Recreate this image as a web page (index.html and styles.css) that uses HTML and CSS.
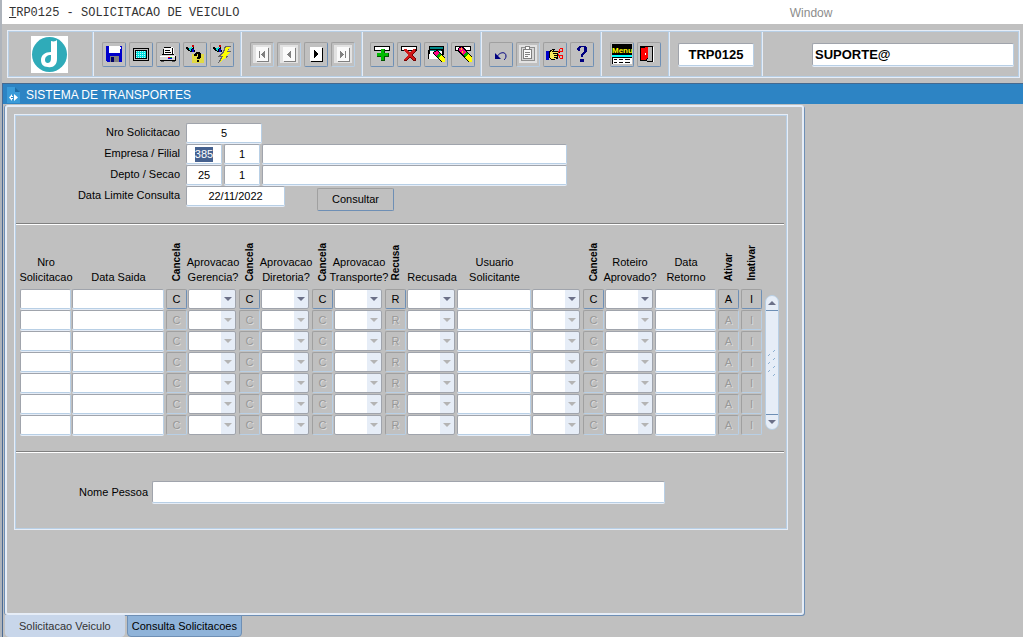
FILE: index.html
```html
<!DOCTYPE html>
<html lang="pt-BR">
<head>
  <meta charset="UTF-8">
  <meta name="viewport" content="width=device-width, initial-scale=1.0">
  <title>TRP0125 - SOLICITACAO DE VEICULO</title>
  <link rel="stylesheet" href="styles.css">
</head>
<body>
  <nav class="menubar">
    <a href="#" class="menu-main"><u>T</u>RP0125 - SOLICITACAO DE VEICULO</a>
    <a href="#" class="menu-window">Window</a>
  </nav>

  <header class="toolbar-area">
    <div class="toolbar">
      <div class="cell logo">
        <svg width="37" height="37" viewBox="0 0 37 37">
          <rect width="37" height="37" fill="#fff"/>
          <circle cx="18.5" cy="18.5" r="17.5" fill="#2fabb9"/>
          <path d="M20 5C23 6 25 5 26 4V23C26 29 22 32 17 31C12 31 10 28 10 24C10 19 14 16 20 16ZM20 19C16 19 14 21 14 24C14 27 17 28 19 26C20 25 20 23 20 19Z" fill="#fff" fill-rule="evenodd"/>
        </svg>
      </div>

      <div class="cell tools">
        <button type="button" class="tool" aria-label="Salvar">
          <svg viewBox="0 0 18 18">
            <path d="M1 1H17V17H2L1 16Z" fill="#00c"/>
            <path d="M4 1H15V8H4Z" fill="#fff"/>
            <path d="M5 11H14V17H5Z" fill="#808080"/>
            <path d="M6 12H9V17H6Z" fill="#006"/>
            <path d="M15 2H16V4H15Z" fill="#fff"/>
          </svg>
        </button>
        <button type="button" class="tool" aria-label="Tela">
          <svg viewBox="0 0 18 18">
            <rect x="1" y="3" width="16" height="13" rx="1" fill="#000"/>
            <rect x="2" y="4" width="14" height="11" fill="#c0c0c0"/>
            <rect x="3" y="5" width="12" height="9" fill="#000"/>
            <rect x="4" y="6" width="10" height="7" fill="#0dd"/>
            <path d="M4 6.5H14M4 8.5H14M4 10.5H14M4 12.5H14" stroke="#bff" stroke-dasharray="1 1"/>
          </svg>
        </button>
        <button type="button" class="tool" aria-label="Imprimir">
          <svg viewBox="0 0 18 18">
            <path d="M5 2H13L15 4V11H4V8H5Z" fill="#fff"/>
            <path d="M5 2H12V3H5ZM13 3H14V10H13ZM4 4H5V10H4ZM6 5H11V6H6ZM6 7H12V8H6Z" fill="#000"/>
            <path d="M3 9H15L17 11V15H1V11Z" fill="#d8d8d8"/>
            <path d="M3 9H15V10H3ZM1 15H17V16H1ZM16 11H17V15H16Z" fill="#000"/>
            <path d="M1 11H16V12H1Z" fill="#fff"/>
            <path d="M9 12H11V13H9Z" fill="#f00"/><path d="M11 12H13V13H11Z" fill="#0b0"/><path d="M9 13H13V14H9Z" fill="#00f"/>
            <path d="M2 16H5V17H2ZM13 16H16V17H13Z" fill="#555"/>
          </svg>
        </button>
        <button type="button" class="tool" aria-label="Entrar consulta">
          <svg viewBox="0 0 18 18">
            <path d="M6 9H18V18H6Z" fill="#e8e020" opacity=".8"/>
            <path d="M6 0H8V2H6Z" fill="#c00"/>
            <path d="M0 2H2L3 4H5L7 2H8L9 7H5L0 4Z" fill="#000"/>
            <path d="M2 4L6 2L5 6Z" fill="#0dd"/><path d="M6 4H8V7H6Z" fill="#00c"/>
            <path d="M8 11V9L10 7H13L15 9V12L13 14H11V12L12 11V9H11V11ZM11 15H13V17H11Z" fill="#000"/>
          </svg>
        </button>
        <button type="button" class="tool" aria-label="Executar consulta">
          <svg viewBox="0 0 18 18">
            <path d="M6 0H8V2H6Z" fill="#c00"/>
            <path d="M0 2H2L3 4H5L7 2H8L9 7H5L0 4Z" fill="#000"/>
            <path d="M2 4L6 2L5 6Z" fill="#0dd"/><path d="M6 4H8V7H6Z" fill="#00c"/>
            <path d="M12 1H18L15 6H18L14 11H16L5 18L8 12H5L10 6Z" fill="#666"/>
            <path d="M13 2H17L14 7H17L12 12H14L7 17L10 11H7L11 7Z" fill="#ff0"/>
          </svg>
        </button>
      </div>

      <div class="cell tools nav-tools">
        <button type="button" class="tool" aria-label="Primeiro" disabled>
          <svg viewBox="0 0 18 18"><rect width="18" height="18" fill="#e2e2e2"/><rect x="4" y="3" width="12" height="14" fill="#808080"/><rect x="3" y="2" width="12" height="14" fill="#fafafa"/><path d="M6 6H7V13H6ZM12 6V13L8 9.5Z" fill="#808080"/></svg>
        </button>
        <button type="button" class="tool" aria-label="Anterior" disabled>
          <svg viewBox="0 0 18 18"><rect width="18" height="18" fill="#e2e2e2"/><rect x="4" y="3" width="12" height="14" fill="#808080"/><rect x="3" y="2" width="12" height="14" fill="#fafafa"/><path d="M11 6V13L7 9.5Z" fill="#808080"/></svg>
        </button>
        <button type="button" class="tool" aria-label="Proximo">
          <svg viewBox="0 0 18 18"><rect x="4" y="3" width="12" height="14" fill="#000"/><rect x="3" y="2" width="12" height="14" fill="#fff"/><path d="M7 5V13L11 9Z" fill="#000"/></svg>
        </button>
        <button type="button" class="tool" aria-label="Ultimo" disabled>
          <svg viewBox="0 0 18 18"><rect width="18" height="18" fill="#e2e2e2"/><rect x="4" y="3" width="12" height="14" fill="#808080"/><rect x="3" y="2" width="12" height="14" fill="#fafafa"/><path d="M6 6V13L10 9.5ZM11 6H12V13H11Z" fill="#808080"/></svg>
        </button>
      </div>

      <div class="cell tools record-tools">
        <button type="button" class="tool" aria-label="Inserir">
          <svg viewBox="0 0 18 18"><path d="M1 1H17V6H1Z" fill="#000"/><path d="M2 2H16V5H2Z" fill="#fff"/><path d="M8 4H12V8H16V12H12V16H8V12H4V8H8Z" fill="#050"/><path d="M8 4H11V8H15V11H11V15H8V11H4V8H8Z" fill="#0b0"/></svg>
        </button>
        <button type="button" class="tool" aria-label="Remover">
          <svg viewBox="0 0 18 18"><path d="M1 1H17V6H1Z" fill="#000"/><path d="M2 2H16V5H2Z" fill="#fff"/><path d="M4 4H7L10 8L13 4H16V6L12 10L16 14V16H13L10 12L7 16H4V14L8 10L4 6Z" fill="#700"/><path d="M4 4H7L10 8L13 4H15V6L11 10L15 14V15H13L10 11L6 15H4V14L8 10L4 6Z" fill="#d01818"/></svg>
        </button>
        <button type="button" class="tool" aria-label="Limpar bloco">
          <svg viewBox="0 0 18 18">
            <path d="M2 1H17V10H16V14H1V5H2Z" fill="#000"/><path d="M3 2H16V4H3Z" fill="#088"/><path d="M3 6H15V9H3ZM2 9H12V14H2Z" fill="#fff"/><path d="M3 5H14V6H3Z" fill="#088"/>
            <path d="M6 7L10 5L14 9L18 13V17H14L7 10Z" fill="#000"/><path d="M7 7L10 6L12 8L9 11L7 9Z" fill="#f08"/><path d="M12 8L14 10L11 13L9 11Z" fill="#0a0"/><path d="M14 10L18 14V17H15L11 13Z" fill="#ff0"/>
          </svg>
        </button>
        <button type="button" class="tool" aria-label="Limpar registro">
          <svg viewBox="0 0 18 18">
            <path d="M1 1H17V6H1Z" fill="#000"/><path d="M2 2H16V5H2Z" fill="#fff"/>
            <path d="M4 3L8 1L13 6L18 12V17H14L9 12L4 6Z" fill="#000"/><path d="M5 3L8 2L12 7L9 10L5 5Z" fill="#f08"/><path d="M7 3H8V5H7ZM8 6H9V8H8Z" fill="#fd0"/><path d="M12 7L14 9L11 12L9 10Z" fill="#0a0"/><path d="M14 9L18 13V17H15L11 12Z" fill="#ff0"/>
          </svg>
        </button>
      </div>

      <div class="cell tools edit-tools">
        <button type="button" class="tool" aria-label="Desfazer">
          <svg class="smooth" viewBox="0 0 18 18"><path d="M5 12C7 7 14 6 14 11C14 13 13 14 12 15" fill="none" stroke="#000080"/><path d="M3 8V14H9Z" fill="#000080"/></svg>
        </button>
        <button type="button" class="tool" aria-label="Colar" disabled>
          <svg viewBox="0 0 18 18"><rect width="18" height="18" fill="#e2e2e2"/><path d="M2 2H16V16H2Z" fill="#909090"/><path d="M3 3H15V15H3Z" fill="#d8d8d8"/><path d="M4 4H13V14H4Z" fill="#808080"/><path d="M5 5H12V13H5Z" fill="#fafafa"/><path d="M6 1H11V5H6Z" fill="#808080"/><path d="M7 2H10V4H7Z" fill="#fff"/><path d="M6 7H11V8H6ZM6 9H11V10H6ZM6 11H9V12H6Z" fill="#808080"/></svg>
        </button>
        <button type="button" class="tool" aria-label="Lista de valores">
          <svg viewBox="0 0 18 18"><path d="M0 6H3V15H0Z" fill="#00c"/><path d="M3 6L7 4H9L8 6H14V8H12V14H9V15H5L3 13Z" fill="#000"/><path d="M4 7L7 5L6 7H13V8H7V9H11V10H8V11H11V12H8V13H10V14H5L4 12Z" fill="#f5e95a"/><path d="M14 3H17V7H14L12 8V6H13V4ZM14 4V6H16V4ZM12 9L14 10H17V14H14L13 13V11H12ZM14 11V13H16V11Z" fill="#f00" fill-rule="evenodd"/></svg>
        </button>
        <button type="button" class="tool" aria-label="Ajuda">
          <svg viewBox="0 0 18 18"><path d="M4 3L6 1H12L14 3V7L10 10V12H8V9L11 6V3L10 2H8L7 3V6H5L4 5ZM7 14H11V17H7Z" fill="#000080"/></svg>
        </button>
      </div>

      <div class="cell tools exit-tools">
        <button type="button" class="tool menu-tool" aria-label="Menu">
          <svg viewBox="0 0 20 20">
            <path d="M0 0H20V11H0Z" fill="#000"/>
            <text x="0" y="9" class="menu-word">Menu</text>
            <path d="M0 11H20V13H0Z" fill="#0ff"/><path d="M0 13H20V20H0Z" fill="#fff"/>
            <path d="M0 13H20V14H0ZM2 15H5V16H2ZM7 15H11V16H7ZM13 15H18V16H13ZM2 18H5V19H2ZM7 18H11V19H7ZM13 18H18V19H13ZM0 14H1V20H0Z" fill="#000"/>
          </svg>
        </button>
        <button type="button" class="tool" aria-label="Sair">
          <svg viewBox="0 0 18 18"><path d="M0 1H13V17H7V16H0Z" fill="#000"/><path d="M13 2H14V17H13Z" fill="#fff"/><path d="M8 2H12V16H7L8 13Z" fill="#b8b8b8"/><path d="M1 3L8 2V12L6 15H1Z" fill="#f00"/><path d="M5 8H6V10H5Z" fill="#fff"/></svg>
        </button>
      </div>

      <div class="cell program"><input type="text" class="big" value="TRP0125" aria-label="Programa"></div>
      <div class="cell user"><input type="text" class="big" value="SUPORTE@" aria-label="Usuario"></div>
    </div>
  </header>

  <main class="window">
    <h1 class="titlebar">
      <svg width="13" height="16" viewBox="0 0 13 16"><path d="M0 0H8L13 5V16H0Z" fill="#3a9bd8"/><path d="M8 0V5H13Z" fill="#1f6ea8"/><path d="M5 7L2 10.5L5 14V12H6V9H5ZM7 7V14L11 10.5Z" fill="#fff"/><path d="M4 10H6V11H4Z" fill="#2d84c4"/></svg>
      SISTEMA DE TRANSPORTES
    </h1>

    <div class="panel">
      <div class="group">
        <form class="filters">
          <div class="field-row">
            <label for="nro">Nro Solicitacao</label>
            <input type="text" id="nro" class="w-nro" value="5">
          </div>
          <div class="field-row">
            <label id="empresa-label">Empresa / Filial</label>
            <span class="box w-code" role="textbox" tabindex="0" contenteditable="true" aria-labelledby="empresa-label"><mark>385</mark></span>
            <input type="text" class="w-code" value="1" aria-label="Filial">
            <input type="text" class="w-desc" aria-label="Nome filial">
          </div>
          <div class="field-row">
            <label for="depto">Depto / Secao</label>
            <input type="text" id="depto" class="w-code" value="25">
            <input type="text" class="w-code" value="1" aria-label="Secao">
            <input type="text" class="w-desc" aria-label="Nome secao">
          </div>
          <div class="field-row">
            <label for="limite">Data Limite Consulta</label>
            <input type="text" id="limite" class="w-date" value="22/11/2022">
            <button type="button" class="push consult">Consultar</button>
          </div>
        </form>

        <hr>

        <div class="requests">
          <table>
            <colgroup>
              <col class="c-nro"><col class="c-saida"><col class="c-btn"><col class="c-sel">
              <col class="c-btn"><col class="c-sel"><col class="c-btn"><col class="c-sel">
              <col class="c-btn"><col class="c-sel"><col class="c-user"><col class="c-sel">
              <col class="c-btn"><col class="c-sel"><col class="c-retorno"><col class="c-btn"><col class="c-btn">
            </colgroup>
            <thead>
              <tr>
                <th><span>Nro<br>Solicitacao</span></th>
                <th><span>Data Saida</span></th>
                <th class="vertical"><b>Cancela</b></th>
                <th><span>Aprovacao<br>Gerencia?</span></th>
                <th class="vertical"><b>Cancela</b></th>
                <th><span>Aprovacao<br>Diretoria?</span></th>
                <th class="vertical"><b>Cancela</b></th>
                <th><span>Aprovacao<br>Transporte?</span></th>
                <th class="vertical"><b>Recusa</b></th>
                <th><span>Recusada</span></th>
                <th><span>Usuario<br>Solicitante</span></th>
                <th></th>
                <th class="vertical"><b>Cancela</b></th>
                <th><span>Roteiro<br>Aprovado?</span></th>
                <th><span>Data<br>Retorno</span></th>
                <th class="vertical"><b>Ativar</b></th>
                <th class="vertical"><b>Inativar</b></th>
              </tr>
            </thead>
            <tbody id="rows"></tbody>
          </table>

          <div class="scrollbar">
            <button type="button" aria-label="Subir"><svg width="8" height="4" viewBox="0 0 8 4"><path d="M4 0L8 4H0Z"/></svg></button>
            <div class="track">
              <svg width="8" height="28" viewBox="0 0 8 28" stroke="#8fb0d0" fill="none">
                <path d="M0 7L2 5M5 3L7 1M0 15L2 13M5 11L7 9M0 23L2 21M5 19L7 17M5 27L7 25"/>
              </svg>
            </div>
            <button type="button" aria-label="Descer"><svg width="8" height="4" viewBox="0 0 8 4"><path d="M0 0H8L4 4Z"/></svg></button>
          </div>
        </div>

        <hr>

        <div class="person">
          <label for="pessoa">Nome Pessoa</label>
          <input type="text" id="pessoa">
        </div>
      </div>
    </div>

    <div class="tabs" role="tablist">
      <button type="button" class="tab" role="tab">Solicitacao Veiculo</button>
      <button type="button" class="tab active" role="tab" aria-selected="true">Consulta Solicitacoes</button>
    </div>
  </main>

  <script>
    // one entry per column: text box, drop-down or button letter
    const columns = [
      ['text', 'Nro Solicitacao'], ['text', 'Data Saida'],
      ['button', 'C'], ['select', 'Aprovacao Gerencia'],
      ['button', 'C'], ['select', 'Aprovacao Diretoria'],
      ['button', 'C'], ['select', 'Aprovacao Transporte'],
      ['button', 'R'], ['select', 'Recusada'],
      ['text', 'Usuario Solicitante'], ['select', 'Situacao'],
      ['button', 'C'], ['select', 'Roteiro Aprovado'],
      ['text', 'Data Retorno'], ['button', 'A'], ['button', 'I']
    ];

    function cell([type, name], off) {
      if (type === 'text') return `<td><input type="text" aria-label="${name}"></td>`;
      if (type === 'select') return `<td><span class="combo"><select aria-label="${name}" ${off}><option></option></select></span></td>`;
      return `<td class="act"><button type="button" class="push" ${off}>${name}</button></td>`;
    }

    let html = '';
    for (let i = 0; i < 7; i++) {
      const off = i === 0 ? '' : 'disabled';
      html += '<tr>' + columns.map(c => cell(c, off)).join('') + '</tr>';
    }
    document.getElementById('rows').innerHTML = html;
  </script>
</body>
</html>
```
FILE: styles.css
```css
:root {
  --bg: #c0c0c0;
  --blue: #2d84c4;
  --line: #6e8fb5;
  --pale: #b8cfe5;
  --light: #e6edf7;
  --shade: #a0a4ac;
}

* {
  box-sizing: border-box;
}

body {
  margin: 0;
  min-height: 100vh;
  border-left: 2px solid #aeb4bc;
  background: var(--bg);
  color: #000;
  font-family: "Liberation Sans", Arial, sans-serif;
  font-size: 11px;
  line-height: 15px;
}

input,
button,
select {
  font: inherit;
  color: inherit;
  margin: 0;
}

/* menu */
.menubar {
  display: grid;
  grid-template-columns: 77% 1fr;
  align-items: center;
  height: 24px;
  padding: 2px 0 0 7px;
  background: #fff;
}

.menubar a {
  text-decoration: none;
}

.menu-main {
  color: #333;
  font-family: "Liberation Mono", "Courier New", monospace;
  font-size: 12px;
}

.menu-window {
  color: #8c8c8c;
  font-size: 12px;
}

/* toolbar */
.toolbar-area {
  padding: 6px 3px 5px 5px;
}

.toolbar {
  display: flex;
  height: 48px;
  padding: 1px 1px 1px 0;
  border: 1px solid var(--light);
  box-shadow: inset 0 0 0 1px var(--pale);
}

.cell {
  display: flex;
  align-items: center;
  border-right: 1px solid var(--light);
  box-shadow: inset -1px 0 0 var(--pale);
}

.logo {
  width: 86px;
  padding-left: 23px;
}

.tools {
  gap: 3px;
  width: 148px;
  padding-left: 8px;
}

.nav-tools {
  width: 121px;
}

.record-tools {
  width: 119px;
  padding-left: 7px;
}

.edit-tools {
  width: 120px;
  padding-left: 7px;
}

.exit-tools {
  width: 68px;
}

.program {
  width: 93px;
  padding-left: 8px;
}

.program input {
  width: 76px;
  text-align: center;
}

.user {
  flex: 1;
  padding: 0 4px 0 49px;
  border-right: 0;
  box-shadow: none;
}

.user input {
  width: 100%;
  text-align: left;
}

.tool {
  display: flex;
  align-items: center;
  justify-content: center;
  flex: none;
  width: 24px;
  height: 25px;
  padding: 0;
}

.tool svg {
  width: 18px;
  height: 18px;
  shape-rendering: crispEdges;
}

.tool .smooth {
  shape-rendering: auto;
}

.menu-tool svg {
  width: 20px;
  height: 20px;
}

.menu-word {
  fill: #ff0;
  font-size: 8px;
  font-weight: bold;
}

/* shared controls */
.tool,
.push {
  background: var(--bg);
  border: 1px solid #a0a0a0;
  border-right-color: var(--line);
  border-bottom-color: var(--line);
  border-radius: 2px;
}

.tool:disabled,
.push:disabled {
  border-right-color: var(--pale);
  border-bottom-color: var(--pale);
}

.push:disabled {
  color: #989898;
  text-shadow: 1px 1px 0 #dcdcdc;
}

input,
.box {
  height: 20px;
  padding: 0 2px;
  border: 1px solid var(--pale);
  border-top-color: var(--shade);
  border-left-color: var(--shade);
  border-radius: 2px;
  background: #fff;
  box-shadow: 0 1px 0 var(--light);
  text-align: center;
}

input.big {
  height: 23px;
  font-size: 13px;
  font-weight: bold;
}

/* form window */
.window {
  border-left: 1px solid #4a6a94;
}

.titlebar {
  display: flex;
  align-items: center;
  gap: 6px;
  height: 21px;
  margin: 0;
  padding: 2px 0 0 4px;
  border-top: 1px solid #45698f;
  background: var(--blue);
  color: #fff;
  font-size: 12px;
  font-weight: normal;
}

.panel {
  max-width: 799px;
  margin: 1px 0 0 2px;
  padding: 7px 14px 83px 7px;
  border: 2px solid var(--light);
  border-radius: 3px;
  box-shadow: 1px 1px 0 var(--line), -1px 0 0 var(--line);
}

.group {
  padding: 8px 1px 26px;
  border: 1px solid var(--light);
  box-shadow: inset 0 0 0 1px var(--pale);
}

.filters {
  display: grid;
  gap: 1px;
}

.field-row {
  display: flex;
  gap: 2px;
}

.field-row label {
  width: 168px;
  padding-right: 4px;
  line-height: 19px;
  text-align: right;
}

.w-nro {
  width: 76px;
}

.w-code {
  width: 36px;
}

.w-desc {
  width: 305px;
}

.w-date {
  width: 99px;
}

.box {
  line-height: 18px;
}

mark {
  display: inline-block;
  height: 15px;
  background: #45618f;
  color: #fff;
  line-height: 15px;
}

.consult {
  width: 77px;
  height: 23px;
  margin: 2px 0 0 30px;
}

hr {
  margin: 12px 2px 0 0;
  border: 0;
  border-top: 1px solid #808080;
  border-bottom: 1px solid #fff;
}

/* requests table */
.requests {
  display: flex;
  align-items: flex-end;
  padding: 0 4px 3px;
}

table {
  table-layout: fixed;
  width: 742px;
  border-collapse: collapse;
}

.c-nro { width: 52px; }
.c-saida { width: 93px; }
.c-btn { width: 23px; }
.c-sel { width: 50px; }
.c-user { width: 75px; }
.c-retorno { width: 62px; }

th,
td {
  padding: 0;
}

th {
  height: 64px;
  padding-bottom: 4px;
  font-weight: normal;
  vertical-align: bottom;
  white-space: nowrap;
}

th span {
  display: block;
  margin: 0 -12px;
}

.vertical b {
  display: inline-block;
  writing-mode: vertical-rl;
  transform: rotate(180deg);
  font-size: 10px;
  line-height: 15px;
}

td {
  height: 21px;
  vertical-align: top;
}

td input {
  display: block;
  width: calc(100% - 1px);
}

.act {
  text-align: center;
}

.act .push {
  display: block;
  width: 21px;
  height: 20px;
  margin: 0 auto;
  padding: 0;
}

.combo {
  display: block;
  position: relative;
  width: 48px;
}

.combo select {
  display: block;
  appearance: none;
  width: 100%;
  height: 20px;
  border: 1px solid var(--shade);
  border-radius: 2px;
  background: linear-gradient(to left, var(--light) 14px, #fff 14px);
  opacity: 1;
}

.combo::after {
  content: "";
  position: absolute;
  top: 8px;
  right: 4px;
  border: 4px solid transparent;
  border-top-color: #6b7088;
  border-bottom: 0;
  pointer-events: none;
}

.combo:has(select:disabled)::after {
  border-top-color: #b4b4b4;
}

.scrollbar {
  display: flex;
  flex-direction: column;
  width: 14px;
  height: 135px;
  margin: 0 0 6px 2px;
  border: 1px solid var(--pale);
  border-radius: 7px;
  background: var(--light);
}

.scrollbar button {
  display: flex;
  align-items: center;
  justify-content: center;
  height: 14px;
  padding: 0;
  border: 0;
  background: none;
  fill: #6b7088;
}

.track {
  display: flex;
  flex: 1;
  align-items: center;
  justify-content: center;
  border: 1px solid var(--line);
  border-width: 1px 0;
}

/* person */
.person {
  display: flex;
  align-items: center;
  gap: 4px;
  padding: 28px 121px 0 63px;
}

.person input {
  flex: 1;
  height: 22px;
  text-align: left;
}

/* tabs */
.tabs {
  display: flex;
  gap: 2px;
  margin-left: 2px;
}

.tab {
  height: 22px;
  padding: 0 13px;
  border: 1px solid #c8d6ea;
  border-radius: 0 0 4px 4px;
  background: #c8d6ea;
  color: #333;
}

.tab.active {
  padding: 0 4px;
  border-color: var(--line);
  background: #8fb3d9;
  color: #000;
}
```
